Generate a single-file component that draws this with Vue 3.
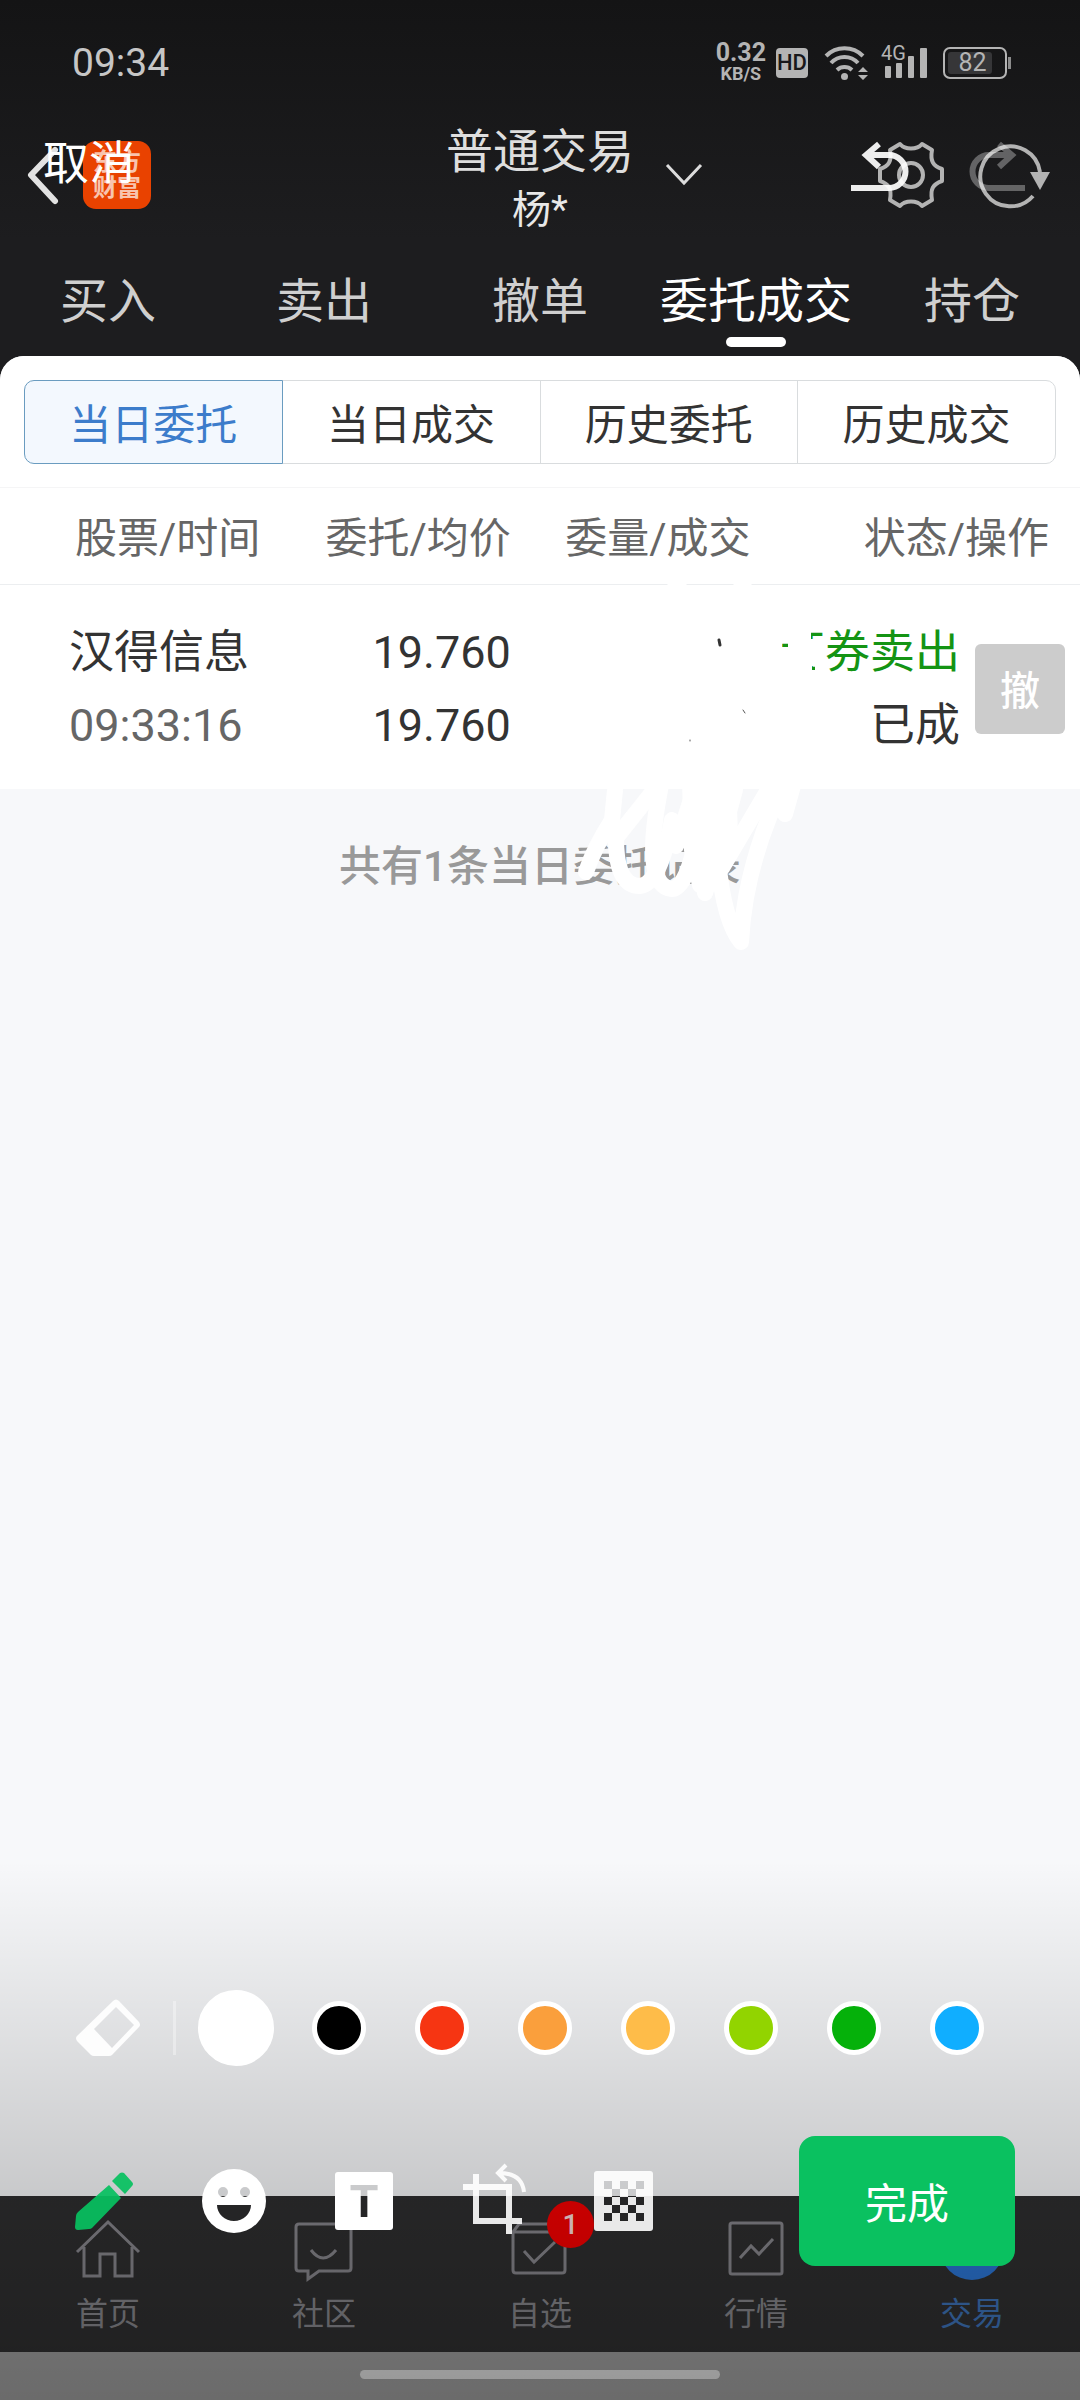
<script setup>
import { ref } from 'vue'

const tabs = ['买入', '卖出', '撤单', '委托成交', '持仓']
const activeTab = ref('委托成交')

const segments = ['当日委托', '当日成交', '历史委托', '历史成交']
const activeSegment = ref('当日委托')

const columns = ['股票/时间', '委托/均价', '委量/成交', '状态/操作']
const orders = ref([
  { id: 1, name: '汉得信息', time: '09:33:16', price: '19.760', avg: '19.760', side: '证券卖出', status: '已成' }
])

const colors = ['#ffffff', '#000000', '#f63512', '#fa9f3c', '#febc49', '#92d400', '#05b10a', '#10aeff']
const activeColor = ref('#ffffff')

// holes of the mosaic icon, as column/row pairs
const mosaic = []
for (let row = 0; row < 5; row++) {
  for (let col = 0; col < 5; col++) {
    if ((row % 2 === 0 && col % 2 === 0) || (row % 2 === 1 && col % 2 === 1)) {
      mosaic.push({ x: 12 + col * 8, y: 12 + row * 8 })
    }
  }
}
</script>

<template>
  <div class="screen">
    <div class="app">
      <div class="statusbar">
        <span class="clock">09:34</span>
        <div class="indicators">
          <div class="speed">
            <span class="rate">0.32</span>
            <span class="unit">KB/S</span>
          </div>
          <span class="hd">HD</span>
          <svg class="wifi" width="45" height="36" viewBox="0 0 45 36" fill="none" stroke="#b4b4b4" stroke-width="4">
            <path d="M2 11a26 26 0 0 1 37 0" />
            <path d="M7 18a18 18 0 0 1 27 0" />
            <path d="M13 25a11 11 0 0 1 15 0" />
            <circle cx="20.500" cy="31.500" r="3.500" fill="#b4b4b4" stroke="none" />
            <path d="M34 27l5-5 5 5zM34 30l5 5 5-5z" fill="#b4b4b4" stroke="none" />
          </svg>
          <div class="signal">
            <span class="net">4G</span>
            <svg width="48" height="32" viewBox="0 0 48 32" fill="#b4b4b4">
              <rect x="4" y="19" width="6" height="12" rx="1" />
              <rect x="15" y="16" width="6" height="15" rx="1" />
              <rect x="27" y="9" width="6" height="22" rx="1" />
              <rect x="39" y="1" width="7" height="30" rx="1" />
            </svg>
          </div>
          <div class="battery"><span class="level">82</span></div>
        </div>
      </div>

      <header class="header">
        <div class="left">
          <button class="icon" type="button" aria-label="返回">
            <svg width="32" height="64" viewBox="0 0 32 64" fill="none" stroke="#e2e2e2" stroke-width="6" stroke-linecap="round" stroke-linejoin="round">
              <path d="M27 7L3 32l24 26" />
            </svg>
          </button>
          <span class="logo">东方<br>财富</span>
        </div>
        <div class="title">
          <h1>普通交易</h1>
          <p>杨*</p>
        </div>
        <div class="right">
          <button class="icon" type="button" aria-label="切换账户">
            <svg width="36" height="24" viewBox="0 0 36 24" fill="none" stroke="#dcdcdc" stroke-width="3">
              <path d="M1 2l17 18L35 2" />
            </svg>
          </button>
          <button class="icon settings" type="button" aria-label="设置">
            <svg width="68" height="68" viewBox="0 0 68 68" fill="none" stroke="#b3b3b3" stroke-width="4" stroke-linejoin="round">
              <path d="M45 3C40 9 28 9 23 3L13 9C15 20 12 25 3 28V40C12 43 15 48 13 59L23 65C28 59 40 59 45 65L55 59C53 48 56 43 65 40V28C56 25 53 20 55 9Z" />
              <circle cx="34" cy="34" r="12" />
            </svg>
          </button>
          <button class="icon" type="button" aria-label="刷新">
            <svg width="72" height="68" viewBox="0 0 72 68" fill="none" stroke="#b3b3b3" stroke-width="4">
              <path d="M54 55A30 30 0 1 1 61 31" />
              <path d="M51 31H71L61 49Z" fill="#b3b3b3" stroke="none" />
            </svg>
          </button>
        </div>
      </header>

      <nav class="tabs">
        <button
          v-for="tab in tabs"
          :key="tab"
          type="button"
          :class="{ active: tab === activeTab }"
          @click="activeTab = tab"
        >{{ tab }}</button>
      </nav>

      <main class="content">
        <section class="panel">
          <div class="segments">
            <button
              v-for="item in segments"
              :key="item"
              type="button"
              :class="{ active: item === activeSegment }"
              @click="activeSegment = item"
            >{{ item }}</button>
          </div>

          <table class="orders">
            <thead>
              <tr>
                <th v-for="column in columns" :key="column">{{ column }}</th>
              </tr>
            </thead>
            <tbody>
              <tr v-for="order in orders" :key="order.id">
                <td>
                  <div>{{ order.name }}</div>
                  <div class="muted">{{ order.time }}</div>
                </td>
                <td>
                  <div>{{ order.price }}</div>
                  <div>{{ order.avg }}</div>
                </td>
                <td></td>
                <td>
                  <div class="action">
                    <div>
                      <div class="sell">{{ order.side }}</div>
                      <div>{{ order.status }}</div>
                    </div>
                    <button class="revoke" type="button">撤</button>
                  </div>
                </td>
              </tr>
            </tbody>
          </table>
        </section>
        <p class="total">共有1条当日委托记录</p>
      </main>

      <nav class="bottom">
        <a href="#">
          <svg width="64" height="64" viewBox="0 0 64 64">
            <path d="M1 34L32 4l31 30M8 29v29h16V36h15v22h17V29" />
          </svg>
          首页
        </a>
        <a href="#">
          <svg width="64" height="64" viewBox="0 0 64 64">
            <path d="M7 6h49q3 0 3 3v41q0 3-3 3H27l-11 8v-8H7q-3 0-3-3V9q0-3 3-3zM19 32q12 16 25 0" />
          </svg>
          社区
        </a>
        <a href="#">
          <svg width="64" height="64" viewBox="0 0 64 64">
            <path d="M5 14L11 6h40l6 8v38q0 3-3 3H8q-3 0-3-3zH57M16 33l10 11 21-20" />
          </svg>
          自选
          <span class="badge">1</span>
        </a>
        <a href="#">
          <svg width="64" height="64" viewBox="0 0 64 64">
            <rect x="6" y="5" width="52" height="51" rx="2" />
            <path d="M16 40l11-12 8 8 14-15" />
          </svg>
          行情
        </a>
        <a href="#" class="current">
          <svg width="64" height="64" viewBox="0 0 64 64">
            <circle cx="32" cy="30" r="32" />
          </svg>
          交易
        </a>
      </nav>
      <div class="homebar"><span></span></div>
    </div>

    <div class="editor">
      <!-- brush strokes drawn over the page -->
      <svg class="drawing" viewBox="0 0 1080 2400" fill="none" stroke="#fff" stroke-width="16" stroke-linecap="round" stroke-linejoin="round">
        <path fill="#fff" fill-rule="evenodd" stroke="none" d="M774 625H826V682H774ZM782 643H788V650H782ZM811 631H823V639H811ZM812 666H815V671H812Z" />
        <path d="M675 582h4M741 582h3" />
        <path d="M616 780L612 820Q594 848 586 872" />
        <path d="M662 780L616 838Q616 886 640 886Q660 884 672 820" />
        <path d="M662 780Q640 886 672 889Q692 888 704 790" />
        <path d="M694 790L676 846M700 780V860L705 893Q716 860 735 790" />
        <path d="M690 780H728L730 835L716 878L700 885L692 850Z" fill="#fff" />
        <path d="M718 860Q724 922 741 942Q744 880 770 815L790 780" />
        <path d="M722 868L768 790M780 780L785 814L794 782" />
        <path d="M719 640l1 5" stroke="#333" stroke-width="3" />
        <path d="M743 710l2 3M690 740v1" stroke="#555" stroke-width="1" />
      </svg>

      <div class="topbar">
        <button class="cancel" type="button">取消</button>
        <div class="history">
          <button class="icon" type="button" aria-label="撤销">
            <svg width="56" height="50" viewBox="0 0 56 50" fill="none" stroke="#fff" stroke-opacity=".92" stroke-width="6">
              <path d="M0 46H38a16 16 0 0 0 0-33H15M28 2L15 13l13 12" />
            </svg>
          </button>
          <button class="icon" type="button" aria-label="重做">
            <svg width="56" height="50" viewBox="0 0 56 50" fill="none" stroke="#fff" stroke-width="6" opacity=".32">
              <path d="M56 46H20a16 16 0 0 1 0-33H43M30 2l13 11-13 12" />
            </svg>
          </button>
        </div>
      </div>

      <div class="toolbox">
        <div class="palette">
          <button class="icon" type="button" aria-label="橡皮擦">
            <svg width="64" height="60" viewBox="0 0 64 60" fill="#fff" fill-opacity=".92">
              <path fill-rule="evenodd" d="M37 3q3-3 6 0l20 21q2 3 0 5L36 57q-1 1-3 1H18q-2 0-3-1L1 43q-2-3 0-5ZM40 9L18 31l18 19 22-23Z" />
            </svg>
          </button>
          <span class="line"></span>
          <div class="swatches">
            <button
              v-for="color in colors"
              :key="color"
              type="button"
              :class="{ active: color === activeColor }"
              :aria-label="color"
              @click="activeColor = color"
            ><span :style="{ background: color }"></span></button>
          </div>
        </div>

        <div class="tools">
          <button class="icon" type="button" aria-label="画笔">
            <svg width="64" height="68" viewBox="0 0 64 68" fill="#08c160" fill-opacity=".93">
              <path d="M37 18l12 13-29 30q-1 1-3 1l-11 1q-3 0-3-3l1-11q0-2 2-4Z" />
              <path d="M48 6q2-1 4 0l8 9q2 2 0 4l-7 8-13-13Z" />
            </svg>
          </button>
          <button class="icon" type="button" aria-label="表情">
            <svg width="64" height="68" viewBox="0 0 64 68" fill="#fff">
              <path fill-rule="evenodd" d="M32 2a32 32 0 1 1 0 64 32 32 0 1 1 0-64ZM21 20a5 5 0 1 0 0 10 5 5 0 1 0 0-10ZM43 20a5 5 0 1 0 0 10 5 5 0 1 0 0-10ZM15 38a17 16 0 0 0 34 0Z" />
            </svg>
          </button>
          <button class="icon" type="button" aria-label="文字">
            <svg width="64" height="68" viewBox="0 0 64 68">
              <mask id="letter">
                <rect width="64" height="68" fill="#fff" />
                <text x="32" y="50" font-family="Liberation Sans" font-size="46" font-weight="bold" text-anchor="middle">T</text>
              </mask>
              <rect x="3" y="5" width="58" height="58" rx="3" fill="#fff" mask="url(#letter)" />
            </svg>
          </button>
          <button class="icon" type="button" aria-label="裁剪">
            <svg width="64" height="68" viewBox="0 0 64 68" fill="none" stroke="#fff" stroke-opacity=".9">
              <path d="M14 7V54H60M1 20H47V67" stroke-width="6" />
              <path d="M62 25Q60 6 37 6M44-2l-8 8 8 8" stroke-width="4" />
            </svg>
          </button>
          <button class="icon" type="button" aria-label="马赛克">
            <svg width="64" height="68" viewBox="0 0 64 68">
              <mask id="mosaic">
                <rect width="64" height="68" fill="#fff" />
                <rect v-for="(cell, i) in mosaic" :key="i" :x="cell.x" :y="cell.y + 2" width="8" height="8" />
              </mask>
              <rect x="2" y="4" width="59" height="60" rx="3" fill="#fff" fill-opacity=".9" mask="url(#mosaic)" />
            </svg>
          </button>
          <button class="done" type="button">完成</button>
        </div>
      </div>
    </div>
  </div>
</template>

<style>
body {
  margin: 0;
}
</style>

<style scoped>
.screen {
  position: relative;
  min-height: 100vh;
  overflow: hidden;
  font-family: Roboto, "Noto Sans CJK SC", sans-serif;
}

.app {
  display: flex;
  flex-direction: column;
  min-height: 100vh;
  background: linear-gradient(#141415, #1d1d1f 240px);
}

button {
  padding: 0;
  border: 0;
  background: none;
  font-family: inherit;
}

.icon {
  display: flex;
  align-items: center;
  justify-content: center;
}

svg {
  display: block;
  overflow: visible;
}

/* status bar */
.statusbar {
  display: flex;
  align-items: center;
  justify-content: space-between;
  box-sizing: border-box;
  height: 112px;
  padding: 14px 73px 0 72px;
  color: #b4b4b4;
}

.clock {
  color: #c6c6c6;
  font-size: 39px;
}

.indicators {
  display: flex;
  align-items: center;
}

.speed {
  display: flex;
  flex-direction: column;
  align-items: center;
  margin-right: 10px;
  font-weight: 700;
}

.rate {
  font-size: 25px;
  line-height: 22px;
}

.unit {
  font-size: 18px;
  line-height: 20px;
}

.hd {
  width: 32px;
  margin-right: 16px;
  border-radius: 4px;
  background: #b4b4b4;
  color: #18181a;
  font-size: 22px;
  font-weight: 500;
  line-height: 30px;
  text-align: center;
}

.wifi {
  margin-right: 12px;
}

.signal {
  position: relative;
  margin-right: 14px;
}

.net {
  position: absolute;
  top: -4px;
  left: 0;
  font-size: 20px;
  line-height: 20px;
}

.battery {
  position: relative;
  box-sizing: border-box;
  width: 64px;
  height: 32px;
  padding: 3px;
  border: 2px solid #b4b4b4;
  border-radius: 7px;
}

.battery::after {
  content: "";
  position: absolute;
  top: 8px;
  right: -6px;
  width: 3px;
  height: 12px;
  background: #8c8c8c;
}

.level {
  display: block;
  width: 44px;
  padding-left: 5px;
  box-sizing: border-box;
  border-radius: 3px;
  background: #363638;
  font-size: 25px;
  line-height: 22px;
  text-align: center;
}

/* header */
.header {
  display: grid;
  grid-template-columns: 1fr auto 1fr;
  align-items: center;
  height: 124px;
}

.left {
  display: flex;
  align-items: center;
  gap: 23px;
  padding-left: 28px;
}

.logo {
  box-sizing: border-box;
  width: 68px;
  height: 68px;
  padding-top: 8px;
  border-radius: 13px;
  background: #e94200;
  color: #f8c4ae;
  font-size: 24px;
  font-weight: 700;
  line-height: 26px;
  text-align: center;
}

.title {
  padding-top: 10px;
  text-align: center;
}

.title h1 {
  margin: 0;
  color: #dedede;
  font-size: 47px;
  font-weight: 400;
  line-height: 60px;
}

.title p {
  margin: 0;
  color: #e8e8e8;
  font-size: 39px;
  line-height: 56px;
}

.right {
  display: flex;
  align-items: center;
  gap: 34px;
  padding: 0 29px 0 32px;
}

.settings {
  margin-left: auto;
}

.tabs {
  display: flex;
}

.tabs button {
  flex: 1;
  padding: 36px 0 9px;
  color: #cfcfcf;
  font-size: 48px;
  line-height: 60px;
}

.tabs button::after {
  content: "";
  display: block;
  width: 60px;
  height: 10px;
  margin: 5px auto 0;
  border-radius: 5px;
}

.tabs .active {
  color: #fff;
}

.tabs .active::after {
  background: #fff;
}

/* orders */
.content {
  flex: 1;
  border-radius: 24px 24px 0 0;
  background: #f7f8fa;
}

.panel {
  padding-top: 24px;
  border-radius: 24px 24px 0 0;
  background: #fff;
}

.segments {
  display: flex;
  margin: 0 24px 23px;
}

.segments button {
  flex: 1;
  box-sizing: border-box;
  height: 84px;
  margin-left: -1px;
  padding-bottom: 2px;
  border: 1px solid #d9dcde;
  color: #333;
  font-size: 42px;
}

.segments button:first-child {
  margin-left: 0;
  border-radius: 10px 0 0 10px;
}

.segments button:last-child {
  border-radius: 0 10px 10px 0;
}

.segments .active {
  position: relative;
  border-color: #6a9cc0;
  background: #f3f8fe;
  color: #3c7ccb;
}

.orders {
  width: 100%;
  table-layout: fixed;
  border-collapse: collapse;
  text-align: right;
}

.orders th {
  box-sizing: border-box;
  height: 97px;
  padding: 0 0 3px;
  border-top: 1px solid #f5f5f6;
  border-bottom: 1px solid #eceef0;
  color: #666;
  font-size: 42px;
  font-weight: 400;
}

.orders th:nth-child(1) {
  width: 24.1%;
}

.orders th:nth-child(2) {
  width: 23.2%;
}

.orders th:nth-child(3) {
  width: 22.2%;
}

.orders th:last-child {
  padding-right: 31px;
}

.orders td {
  padding: 31px 0 27px;
  color: #333;
  font-size: 45px;
  line-height: 73px;
}

.orders td:first-child {
  padding-left: 69px;
  text-align: left;
  white-space: nowrap;
}

.orders td:last-child {
  padding-right: 15px;
}

.orders .muted {
  color: #666;
}

.orders .sell {
  color: #149414;
}

.action {
  display: flex;
  align-items: center;
  justify-content: flex-end;
  gap: 15px;
}

.revoke {
  width: 90px;
  height: 90px;
  padding-bottom: 2px;
  border-radius: 6px;
  background: #ccc;
  color: #fff;
  font-size: 40px;
  font-weight: 500;
}

.total {
  margin: 48px 0 0;
  color: #999;
  font-size: 42px;
  font-weight: 500;
  line-height: 60px;
  text-align: center;
}

/* bottom navigation */
.bottom {
  display: flex;
  height: 156px;
  background: #2e2e2f;
}

.bottom a {
  position: relative;
  flex: 1;
  display: flex;
  flex-direction: column;
  align-items: center;
  gap: 12px;
  padding-top: 22px;
  color: #838388;
  font-size: 32px;
  line-height: 40px;
  text-decoration: none;
}

.bottom svg {
  fill: none;
  stroke: #86858b;
  stroke-width: 3;
}

.bottom .current {
  color: #3c70b4;
}

.bottom .current svg {
  fill: #2b74d2;
  stroke: none;
}

.badge {
  position: absolute;
  top: 5px;
  left: calc(50% + 7px);
  width: 47px;
  height: 47px;
  border-radius: 50%;
  background: #f60000;
  color: #ffdcdc;
  font-size: 28px;
  font-weight: 500;
  line-height: 47px;
  text-align: center;
}

.homebar {
  display: flex;
  justify-content: center;
  height: 30px;
  padding-top: 18px;
  background: #999;
}

.homebar span {
  width: 360px;
  height: 9px;
  border-radius: 5px;
  background: #d9d9d9;
}

/* editor layer over the page */
.editor {
  position: absolute;
  inset: 0;
  display: flex;
  flex-direction: column;
  justify-content: space-between;
}

.drawing {
  position: absolute;
  top: 0;
  left: 0;
  width: 100%;
}

.topbar {
  position: relative;
  display: flex;
  align-items: flex-start;
  justify-content: space-between;
  padding: 133px 55px 0 43px;
}

.cancel {
  color: #fff;
  font-size: 46px;
  line-height: 60px;
}

.history {
  display: flex;
  gap: 62px;
  padding-top: 9px;
}

.toolbox {
  position: relative;
  padding: 130px 0 134px;
  background: linear-gradient(rgba(0, 0, 0, 0), rgba(0, 0, 0, 0.3));
}

.palette {
  display: flex;
  align-items: center;
  height: 76px;
  padding-left: 76px;
}

.line {
  width: 3px;
  height: 54px;
  margin: 0 8px 0 33px;
  background: rgba(255, 255, 255, 0.35);
}

.swatches {
  display: flex;
  flex: 1;
}

.swatches button {
  flex: 0 1 103px;
  display: flex;
  align-items: center;
  justify-content: center;
}

.swatches span {
  box-sizing: border-box;
  width: 54px;
  height: 54px;
  border: 5px solid #fff;
  border-radius: 50%;
}

.swatches .active span {
  width: 76px;
  height: 76px;
}

.tools {
  display: flex;
  align-items: center;
  margin-top: 70px;
  padding: 0 65px 0 39px;
}

.tools .icon {
  width: 130px;
}

.done {
  width: 216px;
  height: 130px;
  margin-left: auto;
  padding-bottom: 2px;
  border-radius: 16px;
  background: #0ac160;
  color: #fff;
  font-size: 42px;
}
</style>
